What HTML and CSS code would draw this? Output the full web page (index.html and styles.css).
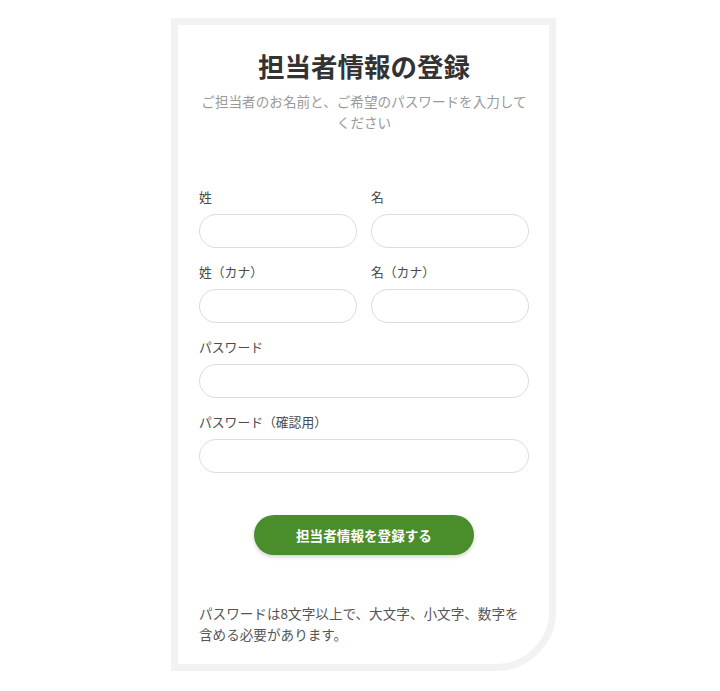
FILE: index.html
```html
<!DOCTYPE html>
<html lang="ja">
<head>
<meta charset="utf-8">
<title>担当者情報の登録</title>
<link rel="stylesheet" href="styles.css">
</head>
<body>
<div class="page">
  <div class="card">
    <h1 class="title">担当者情報の登録</h1>
    <p class="lead">ご担当者のお名前と、ご希望のパスワードを入力してください</p>
    <form class="form">
      <div class="row two">
        <div class="field">
          <label class="label">姓</label>
          <input class="input" type="text">
        </div>
        <div class="field">
          <label class="label">名</label>
          <input class="input" type="text">
        </div>
      </div>
      <div class="row two">
        <div class="field">
          <label class="label">姓（カナ）</label>
          <input class="input" type="text">
        </div>
        <div class="field">
          <label class="label">名（カナ）</label>
          <input class="input" type="text">
        </div>
      </div>
      <div class="row">
        <div class="field">
          <label class="label">パスワード</label>
          <input class="input" type="password">
        </div>
      </div>
      <div class="row">
        <div class="field">
          <label class="label">パスワード（確認用）</label>
          <input class="input" type="password">
        </div>
      </div>
      <div class="actions">
        <button class="btn" type="button">担当者情報を登録する</button>
      </div>
    </form>
    <p class="note">パスワードは8文字以上で、大文字、小文字、数字を含める必要があります。</p>
  </div>
</div>
</body>
</html>
```

FILE: styles.css
```css
html, body {
  margin: 0;
  padding: 0;
  background: #ffffff;
}
body {
  font-family: "Noto Sans CJK JP", "Noto Sans", sans-serif;
  color: #444;
}
.page {
  display: flex;
  justify-content: center;
  align-items: flex-start;
  padding: 18px 0 0 7px;
}
.card {
  width: 385px;
  box-sizing: border-box;
  border: 7px solid #f2f2f2;
  border-radius: 0 0 60px 0;
  background: #fff;
  padding: 22px 20px 19px 21px;
}
.title {
  margin: 0;
  text-align: center;
  font-size: 26.5px;
  line-height: 38px;
  font-weight: 700;
  color: #333;
}
.lead {
  margin: 6px 0 0;
  text-align: center;
  font-size: 13.6px;
  line-height: 21px;
  color: #999;
}
.form {
  margin-top: 54px;
}
.row {
  display: grid;
  grid-template-columns: minmax(0, 1fr);
  gap: 14px;
  margin-bottom: 14px;
}
.row.two {
  grid-template-columns: minmax(0, 1fr) minmax(0, 1fr);
}
.field {
  display: flex;
  flex-direction: column;
  min-width: 0;
}
.label {
  font-size: 12.8px;
  line-height: 19px;
  color: #4a4a4a;
  margin-bottom: 8px;
}
.input {
  width: 100%;
  min-width: 0;
  height: 34px;
  box-sizing: border-box;
  border: 1px solid #dcdcdc;
  border-radius: 17px;
  background: #fff;
  padding: 0 14px;
  font: inherit;
  outline: none;
}
.actions {
  display: flex;
  justify-content: center;
  margin-top: 42px;
}
.btn {
  width: 220px;
  height: 40px;
  border: none;
  border-radius: 20px;
  background: #4a8d2b;
  color: #fff;
  font-family: "Noto Sans CJK JP", sans-serif;
  font-size: 13.6px;
  font-weight: 700;
  box-shadow: 0 2px 4px rgba(0, 0, 0, 0.18);
  cursor: pointer;
}
.note {
  margin: 48px 0 0;
  font-size: 13.6px;
  line-height: 21px;
  color: #555;
}
```
